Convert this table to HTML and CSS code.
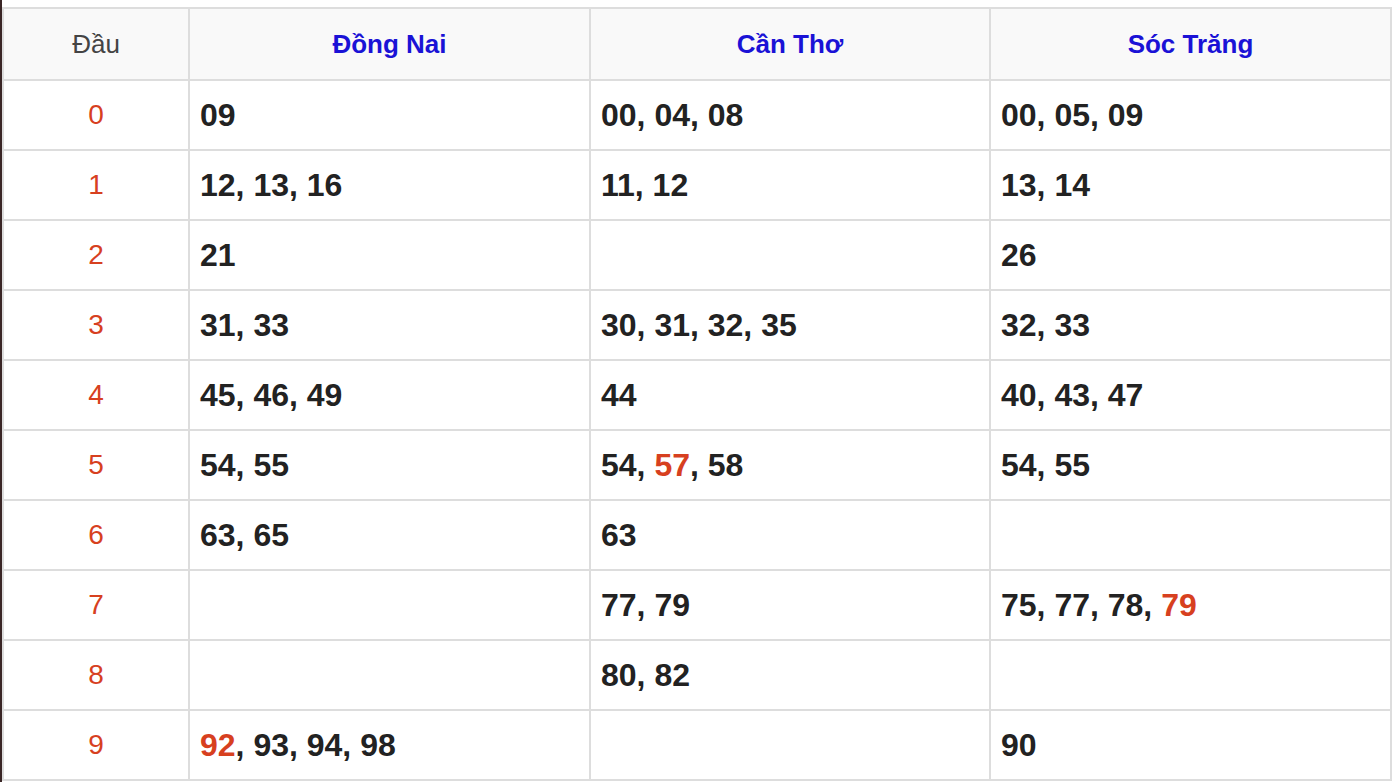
FILE: index.html
```html
<!DOCTYPE html>
<html lang="vi">
<head>
<meta charset="utf-8">
<title>Thống kê đầu</title>
<link rel="stylesheet" href="styles.css">
</head>
<body>
<div class="page">
<table class="loto">
  <colgroup>
    <col class="c-head">
    <col class="c-prov">
    <col class="c-mid">
    <col class="c-prov">
  </colgroup>
  <thead>
    <tr>
      <th class="dau">Đầu</th>
      <th class="prov">Đồng Nai</th>
      <th class="prov">Cần Thơ</th>
      <th class="prov">Sóc Trăng</th>
    </tr>
  </thead>
  <tbody>
    <tr><td class="num">0</td><td class="val">09</td><td class="val">00, 04, 08</td><td class="val">00, 05, 09</td></tr>
    <tr><td class="num">1</td><td class="val">12, 13, 16</td><td class="val">11, 12</td><td class="val">13, 14</td></tr>
    <tr><td class="num">2</td><td class="val">21</td><td class="val"></td><td class="val">26</td></tr>
    <tr><td class="num">3</td><td class="val">31, 33</td><td class="val">30, 31, 32, 35</td><td class="val">32, 33</td></tr>
    <tr><td class="num">4</td><td class="val">45, 46, 49</td><td class="val">44</td><td class="val">40, 43, 47</td></tr>
    <tr><td class="num">5</td><td class="val">54, 55</td><td class="val">54, <span class="hit">57</span>, 58</td><td class="val">54, 55</td></tr>
    <tr><td class="num">6</td><td class="val">63, 65</td><td class="val">63</td><td class="val"></td></tr>
    <tr><td class="num">7</td><td class="val"></td><td class="val">77, 79</td><td class="val">75, 77, 78, <span class="hit">79</span></td></tr>
    <tr><td class="num">8</td><td class="val"></td><td class="val">80, 82</td><td class="val"></td></tr>
    <tr><td class="num">9</td><td class="val"><span class="hit">92</span>, 93, 94, 98</td><td class="val"></td><td class="val">90</td></tr>
  </tbody>
</table>
</div>
</body>
</html>
```
FILE: styles.css
```css
html, body {
  margin: 0;
  padding: 0;
  background: #ffffff;
}
.page {
  border-left: 2px solid #3a2626;
  padding: 7px 0 0 0;
  width: 1394px;
  height: 775px;
  overflow: hidden;
}
.loto {
  border-collapse: collapse;
  table-layout: fixed;
  width: 1388px;
  margin-left: 0;
  font-family: "Liberation Sans", Arial, sans-serif;
}
.c-head { width: 186px; }
.c-prov { width: 401px; }
.c-mid { width: 400px; }
.loto th,
.loto td {
  border: 2px solid #dddddd;
  padding: 0;
}
.loto thead th {
  background: #f9f9f9;
  height: 70px;
  font-size: 26px;
  text-align: center;
}
.loto th.dau {
  font-weight: 400;
  color: #444444;
}
.loto th.prov {
  font-weight: 700;
  color: #1a12d6;
}
.loto td {
  height: 68px;
}
.loto td.num {
  text-align: center;
  color: #d7401f;
  font-size: 28px;
}
.loto td.val {
  text-align: left;
  padding-left: 10px;
  font-weight: 700;
  font-size: 32px;
  color: #222222;
}
.hit {
  color: #d7401f;
}
```
